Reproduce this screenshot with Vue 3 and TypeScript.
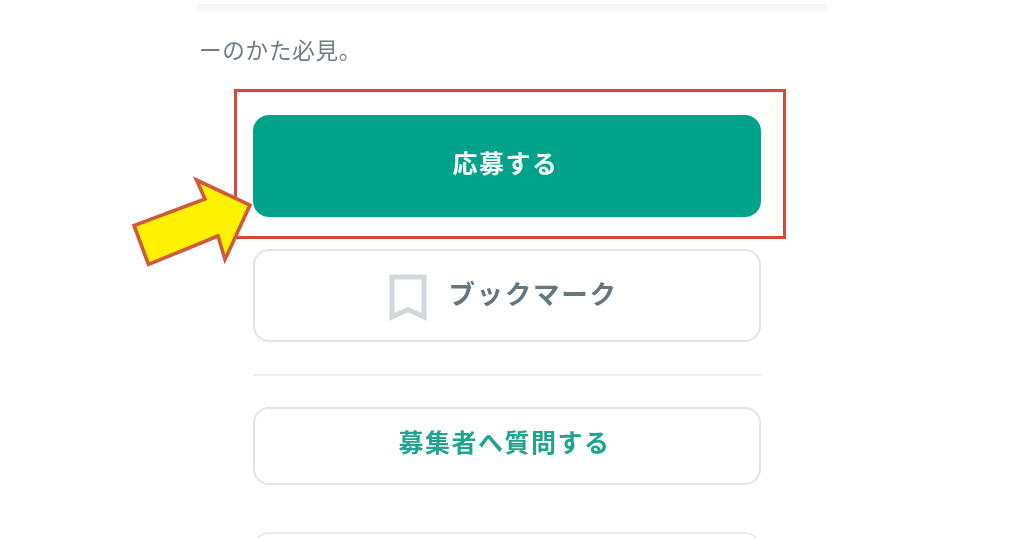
<script setup lang="ts">
const arrowPoints = '196.5,180 250,205 225,259.5 218,236 148.5,264.5 134,225.5 205,199'
</script>

<template>
  <div class="page">
    <main class="column">
      <div class="band"></div>
      <p class="lead">ーのかた必見。</p>
      <div class="actions">
        <button class="btn primary">応募する</button>
        <button class="btn bookmark">
          <svg class="bm-icon" viewBox="0 0 38 48" aria-hidden="true">
            <path d="M3 3H35V43L19 35.5L3 43Z" fill="none" stroke="#d2d8db" stroke-width="5" stroke-linejoin="miter" />
          </svg>
          <span>ブックマーク</span>
        </button>
        <hr class="divider" />
        <button class="btn question">募集者へ質問する</button>
        <div class="next-card"></div>
      </div>
    </main>
    <div class="highlight"></div>
    <svg class="arrow" viewBox="0 0 1024 538" aria-hidden="true">
      <polygon :points="arrowPoints" fill="#fff200" stroke="#cf5b3c" stroke-width="3.6" stroke-linejoin="miter" />
    </svg>
  </div>
</template>

<style scoped>
.page {
  position: relative;
  width: 1024px;
  height: 538px;
  overflow: hidden;
  background: #fff;
  font-family: "Noto Sans CJK JP", "Noto Sans", sans-serif;
  filter: blur(0.45px);
}
.column {
  width: 630px;
  margin: 0 auto;
  padding-top: 4px;
  display: flex;
  flex-direction: column;
}
.band {
  height: 12px;
  background: linear-gradient(#f4f4f4, #fbfbfb 70%, #fff);
}
.lead {
  margin: 18px 0 0 2px;
  font-size: 22.6px;
  letter-spacing: 0.7px;
  line-height: 32px;
  height: 33px;
  color: #6f7d85;
}
.actions {
  margin: 48px 66px 0 56px;
  display: flex;
  flex-direction: column;
}
.btn {
  display: flex;
  align-items: center;
  justify-content: center;
  box-sizing: border-box;
  width: 100%;
  margin: 0;
  border-radius: 16px;
  background: #fff;
  font-family: inherit;
  font-weight: 700;
}
.primary {
  height: 102px;
  padding: 0 3px 8px 0;
  border: none;
  background: #00a38a;
  color: #f4fbf9;
  font-size: 25px;
  letter-spacing: 1.5px;
}
.bookmark {
  height: 93px;
  margin-top: 32px;
  padding: 0 7px 6px 0;
  gap: 21px;
  border: 2px solid #e1e5e7;
  color: #66767f;
  font-size: 26.5px;
  letter-spacing: 1.7px;
}
.bm-icon {
  width: 38px;
  height: 48px;
  margin-top: 10px;
}
.divider {
  width: 100%;
  height: 2px;
  margin: 32px 0 31px;
  border: none;
  background: #eceeef;
}
.question {
  height: 78px;
  padding: 0 5px 11px 0;
  border: 2px solid #e1e5e7;
  color: #1fa48f;
  font-size: 25px;
  letter-spacing: 1.5px;
}
.next-card {
  height: 40px;
  margin-top: 47px;
  box-sizing: border-box;
  border: 2px solid #e9ebec;
  border-radius: 16px;
}
.highlight {
  position: absolute;
  left: 234px;
  top: 89px;
  width: 552px;
  height: 150px;
  box-sizing: border-box;
  border: 3px solid #d9483b;
}
.arrow {
  position: absolute;
  left: 0;
  top: 0;
  width: 1024px;
  height: 538px;
  pointer-events: none;
}
</style>
